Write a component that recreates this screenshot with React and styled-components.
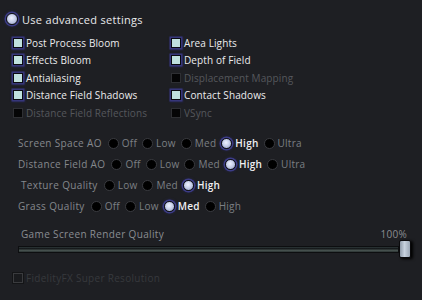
import React from "react";
import styled, { createGlobalStyle } from "styled-components";

const GlobalStyle = createGlobalStyle`
  html, body {
    margin: 0;
    padding: 0;
    background: #1e1f23;
  }
  body {
    font-family: "Open Sans", "Noto Sans", sans-serif;
  }
`;

const CHECKS = [
  [
    { label: "Post Process Bloom", on: true },
    { label: "Effects Bloom", on: true },
    { label: "Antialiasing", on: true },
    { label: "Distance Field Shadows", on: true },
    { label: "Distance Field Reflections", on: false },
  ],
  [
    { label: "Area Lights", on: true },
    { label: "Depth of Field", on: true },
    { label: "Displacement Mapping", on: false },
    { label: "Contact Shadows", on: true },
    { label: "VSync", on: false },
  ],
];

const GROUPS = [
  { label: "Screen Space AO", options: ["Off", "Low", "Med", "High", "Ultra"], value: "High" },
  { label: "Distance Field AO", options: ["Off", "Low", "Med", "High", "Ultra"], value: "High" },
  { label: "Texture Quality", options: ["Low", "Med", "High"], value: "High", indent: 3 },
  { label: "Grass Quality", options: ["Off", "Low", "Med", "High"], value: "Med" },
];

const Page = styled.div`
  width: 422px;
  height: 300px;
  box-sizing: border-box;
  padding: 11px 0 0 6px;
  overflow: hidden;
`;

const Row = styled.div`
  display: flex;
  align-items: center;
  height: 16px;
  gap: ${(p) => p.$gap || 4}px;
`;

const Dot = styled.span`
  box-sizing: border-box;
  display: inline-block;
  flex: none;
  width: ${(p) => p.$size || 11}px;
  height: ${(p) => p.$size || 11}px;
  border-radius: 50%;
  border: 1px solid ${(p) => (p.$on ? "#11121a" : "#3a3b40")};
  background: ${(p) =>
    p.$on ? "radial-gradient(circle at 45% 40%, #eef2ff 0%, #c8d0ea 45%, #8e98c0 100%)" : "#000"};
  box-shadow: ${(p) => (p.$on ? "0 0 0 1.5px #3c3c86, 0 0 3px 1px #2a2a60" : "none")};
`;

const TopLabel = styled.span`
  color: #e9e9ec;
  font-size: 11px;
  letter-spacing: 0.3px;
`;

const Grid = styled.div`
  display: grid;
  grid-template-columns: 158px 1fr;
  margin: 7px 0 0 7px;
`;

const Column = styled.div`
  display: flex;
  flex-direction: column;
`;

const CheckRow = styled.div`
  display: flex;
  align-items: center;
  gap: 3px;
  height: 17.5px;
`;

const Box = styled.span`
  box-sizing: border-box;
  flex: none;
  width: 10px;
  height: 10px;
  border: 1px solid ${(p) => (p.$on ? "#0a0a10" : "#2e2f33")};
  background: ${(p) => (p.$on ? "#bfe0de" : "#050506")};
  box-shadow: ${(p) => (p.$on ? "0 0 0 1.5px #36367a, 0 0 2px 1.5px #26264f" : "none")};
`;

const CheckLabel = styled.span`
  font-size: 10px;
  letter-spacing: 0.1px;
  color: ${(p) => (p.$on ? "#ececee" : "#55575c")};
  white-space: nowrap;
`;

const Groups = styled.div`
  display: flex;
  flex-direction: column;
  margin: 11px 0 0 12px;
`;

const GroupRow = styled.div`
  display: flex;
  align-items: center;
  height: 21px;
  padding-left: ${(p) => p.$indent || 0}px;
`;

const GroupLabel = styled.span`
  font-size: 10px;
  letter-spacing: 0.35px;
  color: #85888d;
  margin-right: 6px;
  white-space: nowrap;
`;

const Option = styled.span`
  display: inline-flex;
  align-items: center;
  gap: 3px;
  margin-right: 5px;
`;

const OptionText = styled.span`
  font-size: 10px;
  letter-spacing: 0.25px;
  color: ${(p) => (p.$on ? "#f0f0f2" : "#7c7f84")};
  font-weight: ${(p) => (p.$on ? 600 : 400)};
`;

const SliderBlock = styled.div`
  margin: 10px 0 0 12px;
  width: 393px;
`;

const SliderHead = styled.div`
  display: flex;
  justify-content: space-between;
  align-items: center;
  padding: 0 4px 0 3px;
  height: 14px;
`;

const SliderLabel = styled.span`
  font-size: 10px;
  letter-spacing: 0.35px;
  color: #8a8d92;
`;

const Percent = styled.span`
  font-size: 10px;
  letter-spacing: 0.3px;
  color: #8a8d92;
`;

const Track = styled.div`
  display: flex;
  align-items: center;
  height: 17px;
`;

const Rail = styled.div`
  flex: 1;
  height: 7px;
  box-sizing: border-box;
  border: 1px solid #0d0e10;
  background: linear-gradient(180deg, #2f3a3b 0%, #0e1012 40%, #4d5956 60%, #2a3232 100%);
`;

const Thumb = styled.div`
  flex: none;
  width: 10px;
  height: 16px;
  border-radius: 2px;
  background: linear-gradient(90deg, #8e9aa8 0%, #c7d2de 45%, #9aa6b4 100%);
  border: 1px solid #0a0a0c;
  box-shadow: 2px 1px 3px #000;
`;

const FinalRow = styled.div`
  display: flex;
  align-items: center;
  gap: 3px;
  height: 14px;
  margin: 13px 0 0 7px;
`;

const DimBox = styled.span`
  box-sizing: border-box;
  width: 10px;
  height: 10px;
  border: 1px solid #3a3b3e;
  background: #1a1b1e;
  box-shadow: 0 0 0 1px #141517;
`;

const DimLabel = styled.span`
  font-size: 10px;
  letter-spacing: 0.3px;
  color: #37393d;
`;

export default function App() {
  return (
    <Page>
      <GlobalStyle />
      <Row $gap={4}>
        <Dot $on $size={12} />
        <TopLabel>Use advanced settings</TopLabel>
      </Row>

      <Grid>
        {CHECKS.map((col, i) => (
          <Column key={i}>
            {col.map((c) => (
              <CheckRow key={c.label}>
                <Box $on={c.on} />
                <CheckLabel $on={c.on}>{c.label}</CheckLabel>
              </CheckRow>
            ))}
          </Column>
        ))}
      </Grid>

      <Groups>
        {GROUPS.map((g) => (
          <GroupRow key={g.label} $indent={g.indent}>
            <GroupLabel>{g.label}</GroupLabel>
            {g.options.map((o) => (
              <Option key={o}>
                <Dot $on={o === g.value} />
                <OptionText $on={o === g.value}>{o}</OptionText>
              </Option>
            ))}
          </GroupRow>
        ))}
      </Groups>

      <SliderBlock>
        <SliderHead>
          <SliderLabel>Game Screen Render Quality</SliderLabel>
          <Percent>100%</Percent>
        </SliderHead>
        <Track>
          <Rail />
          <Thumb />
        </Track>
      </SliderBlock>

      <FinalRow>
        <DimBox />
        <DimLabel>FidelityFX Super Resolution</DimLabel>
      </FinalRow>
    </Page>
  );
}
